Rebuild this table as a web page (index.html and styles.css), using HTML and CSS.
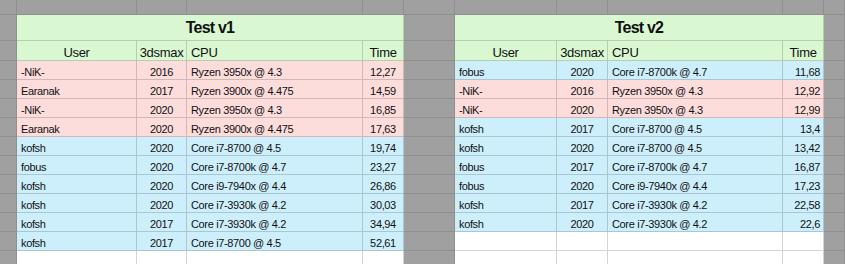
FILE: index.html
```html
<!DOCTYPE html>
<html>
<head>
<meta charset="utf-8">
<link rel="stylesheet" href="styles.css">
</head>
<body>
<div class="sheet">
  <div class="g"></div><div class="g"></div><div class="g"></div><div class="g"></div><div class="g"></div><div class="g"></div><div class="g"></div><div class="g"></div><div class="g"></div><div class="g"></div><div class="g"></div>

  <div class="g"></div><div class="c title span4">Test v1</div><div class="g"></div><div class="c title span4">Test v2</div><div class="g"></div>

  <div class="g"></div><div class="c hd">User</div><div class="c hd">3dsmax</div><div class="c hd left">CPU</div><div class="c hd">Time</div>
  <div class="g"></div><div class="c hd">User</div><div class="c hd">3dsmax</div><div class="c hd left">CPU</div><div class="c hd">Time</div><div class="g"></div>

  <div class="g"></div><div class="c p u">-NiK-</div><div class="c p y">2016</div><div class="c p u">Ryzen 3950x @ 4.3</div><div class="c p y">12,27</div>
  <div class="g"></div><div class="c b u">fobus</div><div class="c b y">2020</div><div class="c b u">Core i7-8700k @ 4.7</div><div class="c b t">11,68</div><div class="g"></div>

  <div class="g"></div><div class="c p u">Earanak</div><div class="c p y">2017</div><div class="c p u">Ryzen 3900x @ 4.475</div><div class="c p y">14,59</div>
  <div class="g"></div><div class="c p u">-NiK-</div><div class="c p y">2016</div><div class="c p u">Ryzen 3950x @ 4.3</div><div class="c p t">12,92</div><div class="g"></div>

  <div class="g"></div><div class="c p u">-NiK-</div><div class="c p y">2020</div><div class="c p u">Ryzen 3950x @ 4.3</div><div class="c p y">16,85</div>
  <div class="g"></div><div class="c p u">-NiK-</div><div class="c p y">2020</div><div class="c p u">Ryzen 3950x @ 4.3</div><div class="c p t">12,99</div><div class="g"></div>

  <div class="g"></div><div class="c p u">Earanak</div><div class="c p y">2020</div><div class="c p u">Ryzen 3900x @ 4.475</div><div class="c p y">17,63</div>
  <div class="g"></div><div class="c b u">kofsh</div><div class="c b y">2017</div><div class="c b u">Core i7-8700 @ 4.5</div><div class="c b t">13,4</div><div class="g"></div>

  <div class="g"></div><div class="c b u">kofsh</div><div class="c b y">2020</div><div class="c b u">Core i7-8700 @ 4.5</div><div class="c b y">19,74</div>
  <div class="g"></div><div class="c b u">kofsh</div><div class="c b y">2020</div><div class="c b u">Core i7-8700 @ 4.5</div><div class="c b t">13,42</div><div class="g"></div>

  <div class="g"></div><div class="c b u">fobus</div><div class="c b y">2020</div><div class="c b u">Core i7-8700k @ 4.7</div><div class="c b y">23,27</div>
  <div class="g"></div><div class="c b u">fobus</div><div class="c b y">2017</div><div class="c b u">Core i7-8700k @ 4.7</div><div class="c b t">16,87</div><div class="g"></div>

  <div class="g"></div><div class="c b u">kofsh</div><div class="c b y">2020</div><div class="c b u">Core i9-7940x @ 4.4</div><div class="c b y">26,86</div>
  <div class="g"></div><div class="c b u">fobus</div><div class="c b y">2020</div><div class="c b u">Core i9-7940x @ 4.4</div><div class="c b t">17,23</div><div class="g"></div>

  <div class="g"></div><div class="c b u">kofsh</div><div class="c b y">2020</div><div class="c b u">Core i7-3930k @ 4.2</div><div class="c b y">30,03</div>
  <div class="g"></div><div class="c b u">kofsh</div><div class="c b y">2017</div><div class="c b u">Core i7-3930k @ 4.2</div><div class="c b t">22,58</div><div class="g"></div>

  <div class="g"></div><div class="c b u">kofsh</div><div class="c b y">2017</div><div class="c b u">Core i7-3930k @ 4.2</div><div class="c b y">34,94</div>
  <div class="g"></div><div class="c b u">kofsh</div><div class="c b y">2020</div><div class="c b u">Core i7-3930k @ 4.2</div><div class="c b t">22,6</div><div class="g"></div>

  <div class="g"></div><div class="c b u">kofsh</div><div class="c b y">2017</div><div class="c b u">Core i7-8700 @ 4.5</div><div class="c b y">52,61</div>
  <div class="g"></div><div class="c"></div><div class="c"></div><div class="c"></div><div class="c"></div><div class="g"></div>

  <div class="g"></div><div class="c"></div><div class="c"></div><div class="c"></div><div class="c"></div>
  <div class="g"></div><div class="c"></div><div class="c"></div><div class="c"></div><div class="c"></div><div class="g"></div>
</div>
</body>
</html>
```
FILE: styles.css
```css
html, body {
  margin: 0;
  padding: 0;
  background: #a0a0a0;
  overflow: hidden;
}

.sheet {
  display: grid;
  grid-template-columns: 17px 120px 50px 176px 41px 51px 102px 51px 175px 41px 21px;
  grid-template-rows: 15px 26px 20px repeat(11, 19px);
  width: 845px;
  height: 264px;
  overflow: hidden;
  font-family: "Liberation Sans", Arial, sans-serif;
  color: #111;
}

.g {
  background: #a0a0a0;
  border-right: 1px solid #8f8f8f;
  border-bottom: 1px solid #8f8f8f;
}

.c {
  box-sizing: border-box;
  background: #fff;
  border-right: 1px solid rgba(0, 0, 0, 0.17);
  border-bottom: 1px solid rgba(0, 0, 0, 0.17);
  display: flex;
  align-items: flex-end;
  padding: 0 4px 1px 4px;
  font-size: 11px;
  letter-spacing: -0.35px;
  white-space: nowrap;
  overflow: hidden;
}

.span4 {
  grid-column: span 4;
}

.title {
  background: #d9f8d2;
  justify-content: center;
  align-items: center;
  padding: 0;
  font-size: 16px;
  font-weight: bold;
  letter-spacing: -0.8px;
}

.hd {
  background: #d9f8d2;
  justify-content: center;
  padding-bottom: 0;
  font-size: 13px;
  letter-spacing: -0.3px;
}

.hd.left {
  justify-content: flex-start;
}

.p {
  background: #fddcdc;
}

.b {
  background: #cdeefb;
}

.u {
  justify-content: flex-start;
}

.y {
  justify-content: center;
}

.t {
  justify-content: flex-end;
  padding-right: 3px;
}
```
